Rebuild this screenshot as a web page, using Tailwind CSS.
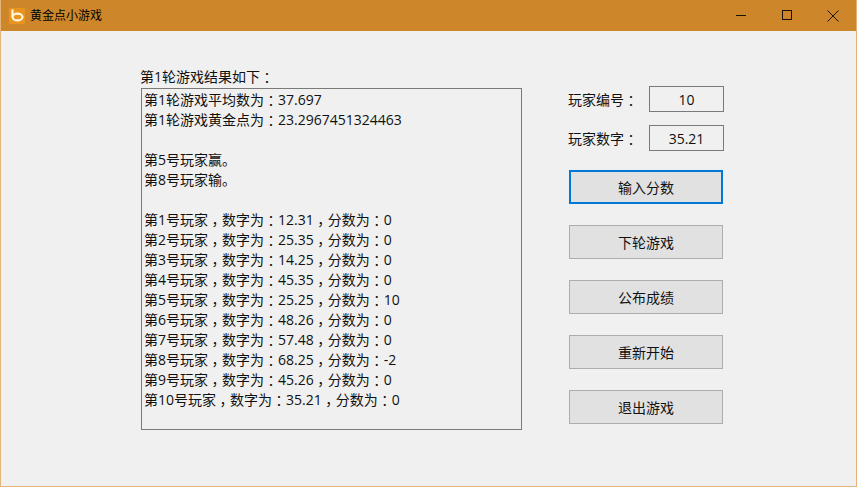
<!DOCTYPE html>
<html lang="zh-CN">
<head>
    <meta charset="UTF-8">
    <title>黄金点小游戏</title>
    <script src="https://cdn.jsdelivr.net/npm/@tailwindcss/browser@4"></script>
</head>
<body class="bg-[#f0f0f0]">
    <div class="w-[857px] h-[487px] overflow-hidden flex flex-col border-x border-b border-[#e3b57c] text-[14px] text-[#111] font-['Open_Sans','Noto_Sans_CJK_SC',sans-serif]">
        <!-- Title bar -->
        <header class="h-[31px] shrink-0 flex items-center bg-[#cd8629] text-[12px] text-black">
            <svg class="ml-[8px] w-[16px] h-[16px]" viewBox="0 0 16 16">
                <rect width="16" height="16" rx="1" fill="#e8941f"/>
                <path d="M3.5 1.5V9" stroke="#fff6dc" stroke-width="2.2" fill="none"/>
                <ellipse cx="8.5" cy="9" rx="5" ry="3.4" stroke="#fff6dc" stroke-width="2.2" fill="none"/>
            </svg>
            <span class="ml-[5px]">黄金点小游戏</span>
            <div class="ml-auto flex">
                <div class="w-[45px] h-[31px] flex items-center justify-center">
                    <svg class="w-[11px] h-[11px] -ml-[2px]" viewBox="0 0 11 11"><path d="M0 5.5H10" stroke="#1a1206"/></svg>
                </div>
                <div class="w-[45px] h-[31px] flex items-center justify-center">
                    <svg class="w-[11px] h-[11px]" viewBox="0 0 11 11"><rect x="0.5" y="0.5" width="9" height="9" fill="none" stroke="#1a1206"/></svg>
                </div>
                <div class="w-[46px] h-[31px] flex items-center justify-center">
                    <svg class="w-[12px] h-[12px]" viewBox="0 0 12 12"><path d="M0.5 0.5L11.5 11.5M11.5 0.5L0.5 11.5" stroke="#1a1206"/></svg>
                </div>
            </div>
        </header>

        <main class="flex-1 flex pl-[140px] pt-[36px]">
            <!-- Results -->
            <section class="w-[381px]">
                <p class="js-text h-[21px] leading-[20px] -ml-px">第1轮游戏结果如下：</p>
                <div class="h-[342px] border border-[#7a7a7a] pl-[2px] pt-[1px] leading-[20px]">
                    <p class="js-text">第1轮游戏平均数为：37.697</p>
                    <p class="js-text">第1轮游戏黄金点为：23.2967451324463</p>
                    <p class="mt-[20px]">第5号玩家赢。</p>
                    <p>第8号玩家输。</p>
                    <p class="js-text mt-[20px]">第1号玩家，数字为：12.31，分数为：0</p>
                    <p class="js-text">第2号玩家，数字为：25.35，分数为：0</p>
                    <p class="js-text">第3号玩家，数字为：14.25，分数为：0</p>
                    <p class="js-text">第4号玩家，数字为：45.35，分数为：0</p>
                    <p class="js-text">第5号玩家，数字为：25.25，分数为：10</p>
                    <p class="js-text">第6号玩家，数字为：48.26，分数为：0</p>
                    <p class="js-text">第7号玩家，数字为：57.48，分数为：0</p>
                    <p class="js-text">第8号玩家，数字为：68.25，分数为：-2</p>
                    <p class="js-text">第9号玩家，数字为：45.26，分数为：0</p>
                    <p class="js-text">第10号玩家，数字为：35.21，分数为：0</p>
                </div>
            </section>

            <!-- Controls -->
            <aside class="ml-[47px] w-[155px] pt-[19px] flex flex-col">
                <div class="flex items-center h-[26px]">
                    <span class="js-text -ml-px">玩家编号：</span>
                    <div class="ml-auto w-[75px] h-[26px] border border-[#7a7a7a] flex items-center justify-center">10</div>
                </div>
                <div class="flex items-center h-[26px] mt-[13px]">
                    <span class="js-text -ml-px">玩家数字：</span>
                    <div class="ml-auto w-[75px] h-[26px] border border-[#7a7a7a] flex items-center justify-center">35.21</div>
                </div>
                <button class="w-[154px] h-[34px] mt-[19px] bg-[#e1e1e1] border-2 border-[#0078d7]">输入分数</button>
                <button class="w-[154px] h-[34px] mt-[21px] bg-[#e1e1e1] border border-[#adadad]">下轮游戏</button>
                <button class="w-[154px] h-[34px] mt-[21px] bg-[#e1e1e1] border border-[#adadad]">公布成绩</button>
                <button class="w-[154px] h-[34px] mt-[21px] bg-[#e1e1e1] border border-[#adadad]">重新开始</button>
                <button class="w-[154px] h-[34px] mt-[21px] bg-[#e1e1e1] border border-[#adadad]">退出游戏</button>
            </aside>
        </main>
    </div>
    <script>
        // The window font centres full-width colons and commas in their cell
        document.querySelectorAll('.js-text').forEach((el) => {
            el.innerHTML = el.textContent.replace(/[：，]/g, `<span class="px-[3.5px] [font-feature-settings:'halt']">$&</span>`);
        });
    </script>
</body>
</html>
